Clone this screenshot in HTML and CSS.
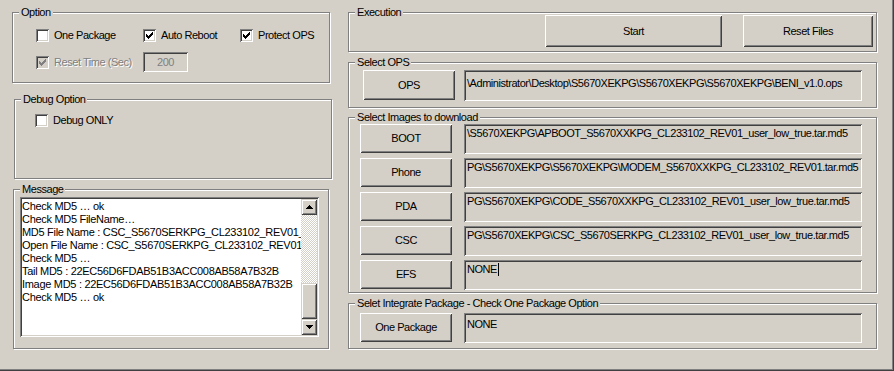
FILE: index.html
```html
<!DOCTYPE html>
<html>
<head>
<meta charset="utf-8">
<link rel="stylesheet" href="styles.css">
</head>
<body>
<div class="window">
  <div class="col-left">
    <div class="group g-option">
      <span class="title">Option</span>
      <div class="opt-grid">
        <label class="chk"><span class="box"></span>One Package</label>
        <label class="chk"><span class="box"><svg width="7" height="7" viewBox="0 0 7 7"><path d="M0 2h1v3H0zM1 3h1v3H1zM2 4h1v3H2zM3 3h1v3H3zM4 2h1v3H4zM5 1h1v3H5zM6 0h1v3H6z"/></svg></span>Auto Reboot</label>
        <label class="chk"><span class="box"><svg width="7" height="7" viewBox="0 0 7 7"><path d="M0 2h1v3H0zM1 3h1v3H1zM2 4h1v3H2zM3 3h1v3H3zM4 2h1v3H4zM5 1h1v3H5zM6 0h1v3H6z"/></svg></span>Protect OPS</label>
        <label class="chk disabled"><span class="box"><svg width="7" height="7" viewBox="0 0 7 7"><path d="M0 2h1v3H0zM1 3h1v3H1zM2 4h1v3H2zM3 3h1v3H3zM4 2h1v3H4zM5 1h1v3H5zM6 0h1v3H6z"/></svg></span>Reset Time (Sec)</label>
        <div class="edit-small">200</div>
      </div>
    </div>
    <div class="group g-debug">
      <span class="title">Debug Option</span>
      <label class="chk"><span class="box"></span>Debug ONLY</label>
    </div>
    <div class="group g-message">
      <span class="title">Message</span>
      <div class="listbox">
        <div class="lines">
          <div>Check MD5 … ok</div>
          <div>Check MD5 FileName…</div>
          <div>MD5 File Name : CSC_S5670SERKPG_CL233102_REV01_user_low_true.tar.md5</div>
          <div>Open File Name : CSC_S5670SERKPG_CL233102_REV01_user_low_true.tar.md5</div>
          <div>Check MD5 …</div>
          <div>Tail MD5 : 22EC56D6FDAB51B3ACC008AB58A7B32B</div>
          <div>Image MD5 : 22EC56D6FDAB51B3ACC008AB58A7B32B</div>
          <div>Check MD5 … ok</div>
        </div>
        <div class="vscroll">
          <div class="sbtn"><svg width="7" height="4" viewBox="0 0 7 4"><path d="M3 0h1v1H3zM2 1h3v1H2zM1 2h5v1H1zM0 3h7v1H0z"/></svg></div>
          <div class="track"></div>
          <div class="thumb"></div>
          <div class="sbtn"><svg width="7" height="4" viewBox="0 0 7 4"><path d="M0 0h7v1H0zM1 1h5v1H1zM2 2h3v1H2zM3 3h1v1H3z"/></svg></div>
        </div>
      </div>
    </div>
  </div>
  <div class="col-right">
    <div class="group g-exec">
      <span class="title">Execution</span>
      <div class="btn btn-start">Start</div>
      <div class="btn btn-reset">Reset Files</div>
    </div>
    <div class="group g-ops">
      <span class="title">Select OPS</span>
      <div class="btn btn-file">OPS</div>
      <div class="field">\Administrator\Desktop\S5670XEKPG\S5670XEKPG\S5670XEKPG\BENI_v1.0.ops</div>
    </div>
    <div class="group g-images">
      <span class="title">Select Images to download</span>
      <div class="row"><div class="btn btn-file">BOOT</div><div class="field">\S5670XEKPG\APBOOT_S5670XXKPG_CL233102_REV01_user_low_true.tar.md5</div></div>
      <div class="row"><div class="btn btn-file">Phone</div><div class="field">PG\S5670XEKPG\S5670XEKPG\MODEM_S5670XXKPG_CL233102_REV01.tar.md5</div></div>
      <div class="row"><div class="btn btn-file">PDA</div><div class="field">PG\S5670XEKPG\CODE_S5670XXKPG_CL233102_REV01_user_low_true.tar.md5</div></div>
      <div class="row"><div class="btn btn-file">CSC</div><div class="field">PG\S5670XEKPG\CSC_S5670SERKPG_CL233102_REV01_user_low_true.tar.md5</div></div>
      <div class="row"><div class="btn btn-file">EFS</div><div class="field">NONE<span class="caret"></span></div></div>
    </div>
    <div class="group g-package">
      <span class="title">Selet Integrate Package - Check One Package Option</span>
      <div class="row"><div class="btn btn-file">One Package</div><div class="field">NONE</div></div>
    </div>
  </div>
</div>
</body>
</html>
```

FILE: styles.css
```css
* { box-sizing: border-box; }
html, body { margin: 0; padding: 0; }
body {
  background: #d4d0c8;
  font-family: "Liberation Sans", Arial, sans-serif;
  font-size: 11px;
  line-height: 13px;
  letter-spacing: -0.45px;
  color: #000;
}
.window {
  width: 894px;
  height: 371px;
  display: flex;
  overflow: hidden;
  box-shadow: inset -1px -1px #404040, inset -2px -2px #808080;
}
.col-left {
  width: 336px;
  flex: none;
  padding: 12px 0 0 12px;
  display: flex;
  flex-direction: column;
  align-items: flex-start;
}
.col-right {
  flex: none;
  padding: 12px 0 0 12px;
  display: flex;
  flex-direction: column;
  align-items: flex-start;
}
.group {
  position: relative;
  border: 1px solid #808080;
  box-shadow: inset 1px 1px #fff, 1px 1px #fff;
  flex: none;
}
.title {
  position: absolute;
  top: -7px;
  left: 6px;
  padding: 0 2px;
  background: #d4d0c8;
  white-space: nowrap;
}
/* left column */
.g-option { width: 318px; height: 71px; padding: 16px 0 0 23px; }
.g-debug { width: 318px; height: 80px; margin: 16px 0 0 2px; padding: 14px 0 0 20px; }
.g-message { width: 316px; height: 160px; margin: 10px 0 0 1px; padding: 7px 0 0 6px; }

.opt-grid {
  display: grid;
  grid-template-columns: 107px 97px auto;
  grid-template-rows: 13px 20px;
  row-gap: 10px;
  align-items: center;
}
.chk { display: flex; align-items: center; gap: 5px; white-space: nowrap; }
.box {
  width: 13px;
  height: 13px;
  flex: none;
  background: #fff;
  box-shadow: inset 1px 1px #808080, inset -1px -1px #fff, inset 2px 2px #404040, inset -2px -2px #d4d0c8;
  display: flex;
  align-items: center;
  justify-content: center;
}
.box svg { display: block; fill: #000; shape-rendering: crispEdges; }
.chk.disabled { color: #808080; text-shadow: 1px 1px #fff; }
.chk.disabled .box { background: #d4d0c8; }
.chk.disabled .box svg { fill: #808080; }
.edit-small {
  width: 45px;
  height: 20px;
  color: #808080;
  text-align: center;
  line-height: 18px;
  padding-top: 1px;
  box-shadow: inset 1px 1px #808080, inset -1px -1px #fff, inset 2px 2px #404040;
}

.listbox {
  width: 299px;
  height: 140px;
  background: #fff;
  padding: 2px;
  display: flex;
  box-shadow: inset 1px 1px #808080, inset -1px -1px #fff, inset 2px 2px #404040, inset -2px -2px #d4d0c8;
}
.lines {
  flex: 1;
  min-width: 0;
  overflow: hidden;
  white-space: nowrap;
  padding-top: 1px;
  letter-spacing: -0.3px;
}
.vscroll { width: 16px; flex: none; display: flex; flex-direction: column; }
.sbtn, .thumb {
  background: #d4d0c8;
  box-shadow: inset 1px 1px #d4d0c8, inset -1px -1px #404040, inset 2px 2px #fff, inset -2px -2px #808080;
}
.sbtn { height: 16px; flex: none; display: flex; align-items: center; justify-content: center; }
.sbtn svg { display: block; fill: #000; shape-rendering: crispEdges; }
.thumb { height: 36px; flex: none; }
.track {
  flex: 1;
  background-color: #fff;
  background-image: conic-gradient(#d4d0c8 25%, #fff 0 50%, #d4d0c8 0 75%, #fff 0);
  background-size: 2px 2px;
}

/* right column */
.btn {
  display: flex;
  align-items: center;
  justify-content: center;
  background: #d4d0c8;
  white-space: nowrap;
  flex: none;
  box-shadow: inset 1px 1px #fff, inset -1px -1px #404040, inset 2px 2px #d4d0c8, inset -2px -2px #808080;
}
.g-exec { width: 529px; height: 40px; padding: 2px 0 0 196px; display: flex; gap: 21px; }
.btn-start { width: 177px; height: 32px; }
.btn-reset { width: 130px; height: 32px; }

.g-ops { width: 529px; height: 46px; margin-top: 10px; padding: 7px 0 0 14px; display: flex; align-items: flex-start; gap: 9px; }
.g-ops .btn-file { width: 92px; height: 30px; }
.g-ops .field { width: 398px; height: 31px; padding-top: 7px; }

.g-images { width: 529px; height: 176px; margin-top: 9px; padding: 6px 0 0 11px; display: flex; flex-direction: column; gap: 4px; }
.g-package { width: 529px; height: 46px; margin-top: 10px; padding: 9px 0 0 11px; }
.g-package .field { padding-top: 5px; }
.row { display: flex; align-items: flex-start; gap: 12px; height: 30px; }
.row .btn-file { width: 92px; height: 29px; }
.row .field { width: 398px; height: 30px; }

.field {
  flex: none;
  padding: 3px 3px 0 3px;
  white-space: nowrap;
  overflow: hidden;
  box-shadow: inset 1px 1px #808080, inset -1px -1px #fff, inset 2px 2px #404040, inset -2px -2px #d4d0c8;
  display: flex;
  align-items: flex-start;
}
.caret { display: inline-block; width: 1px; height: 13px; background: #000; margin-left: 1px; }
```
